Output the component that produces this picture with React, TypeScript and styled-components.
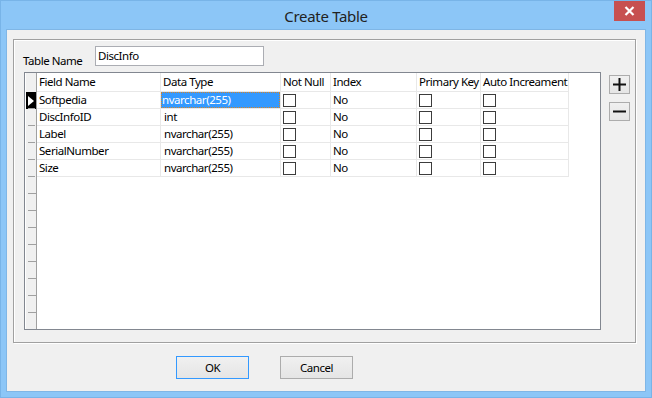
import React from "react";
import styled, { createGlobalStyle } from "styled-components";

const COLS = "12px 124px 120px 50px 86px 64px 88px";

const fields = [
  { name: "Softpedia", type: "nvarchar(255)", active: true },
  { name: "DiscInfoID", type: "int" },
  { name: "Label", type: "nvarchar(255)" },
  { name: "SerialNumber", type: "nvarchar(255)" },
  { name: "Size", type: "nvarchar(255)" },
];

function App() {
  return (
    <>
      <GlobalStyle />
      <Window>
        <TitleBar>
          <span />
          <Title>Create Table</Title>
          <CloseButton>
            <svg width="11" height="10" viewBox="0 0 11 10">
              <path d="M1.5 1 L9.5 9 M9.5 1 L1.5 9" stroke="#fff" strokeWidth="2.2" />
            </svg>
          </CloseButton>
        </TitleBar>

        <Client>
          <GroupBox>
            <NameRow>
              <Label>Table Name</Label>
              <TextBox>DiscInfo</TextBox>
            </NameRow>

            <GridRowArea>
              <Grid>
                <Row header>
                  <RowHead header />
                  <HeadCell>Field Name</HeadCell>
                  <HeadCell>Data Type</HeadCell>
                  <HeadCell>Not Null</HeadCell>
                  <HeadCell>Index</HeadCell>
                  <HeadCell>Primary Key</HeadCell>
                  <HeadCell>Auto Increament</HeadCell>
                </Row>

                {fields.map((f) => (
                  <Row key={f.name}>
                    <RowHead active={f.active}>
                      {f.active && (
                        <svg width="6" height="10" viewBox="0 0 6 10">
                          <path d="M0 0 L6 5 L0 10 Z" fill="#fff" />
                        </svg>
                      )}
                    </RowHead>
                    <Cell>{f.name}</Cell>
                    <Cell selected={f.active}>
                      <CellText selected={f.active}>{f.type}</CellText>
                    </Cell>
                    <Cell>
                      <CheckBox />
                    </Cell>
                    <Cell>No</Cell>
                    <Cell>
                      <CheckBox />
                    </Cell>
                    <Cell>
                      <CheckBox />
                    </Cell>
                  </Row>
                ))}

                <Filler>
                  <RowHeadStrip />
                </Filler>
              </Grid>

              <SideButtons>
                <SmallButton>
                  <svg width="13" height="13" viewBox="0 0 13 13">
                    <path d="M6.5 0 V13 M0 6.5 H13" stroke="#111" strokeWidth="2" />
                  </svg>
                </SmallButton>
                <SmallButton>
                  <svg width="13" height="13" viewBox="0 0 13 13">
                    <path d="M0 6.5 H13" stroke="#111" strokeWidth="2" />
                  </svg>
                </SmallButton>
              </SideButtons>
            </GridRowArea>
          </GroupBox>

          <ButtonBar>
            <DialogButton focused>OK</DialogButton>
            <DialogButton>Cancel</DialogButton>
          </ButtonBar>
        </Client>
      </Window>
    </>
  );
}

const GlobalStyle = createGlobalStyle`
  body {
    margin: 0;
    font-family: "Noto Sans", "Open Sans", sans-serif;
    font-size: 11.5px;
    letter-spacing: -0.45px;
    color: #000;
  }
`;

const Window = styled.div`
  width: 652px;
  height: 398px;
  box-sizing: border-box;
  background: #8cc6f7;
  border: 1px solid #78b4e8;
  padding: 0 5px 5px 5px;
  display: flex;
  flex-direction: column;
`;

const TitleBar = styled.div`
  height: 28px;
  display: grid;
  grid-template-columns: 1fr auto 1fr;
  align-items: start;
`;

const Title = styled.div`
  font-size: 15px;
  color: #222;
  line-height: 30px;
  letter-spacing: -0.3px;
`;

const CloseButton = styled.div`
  justify-self: end;
  width: 31px;
  height: 20px;
  margin-right: 1px;
  background: #c75050;
  display: flex;
  align-items: center;
  justify-content: center;
`;

const Client = styled.div`
  flex: 1;
  background: #f0f0f0;
  border: 1px solid #7fb6e6;
  display: flex;
  flex-direction: column;
`;

const GroupBox = styled.div`
  margin: 9px 9px 0 6px;
  height: 304px;
  box-sizing: border-box;
  border: 1px solid #a0a0a0;
  box-shadow: inset 1px 1px 0 #fff, 1px 1px 0 #fff;
  display: flex;
  flex-direction: column;
`;

const NameRow = styled.div`
  display: flex;
  align-items: flex-start;
  height: 20px;
  padding: 6px 0 0 9px;
`;

const Label = styled.div`
  width: 72px;
  margin-top: 7px;
  line-height: 16px;
`;

const TextBox = styled.div`
  width: 169px;
  height: 20px;
  box-sizing: border-box;
  background: #fff;
  border: 1px solid #abadb3;
  padding: 0 2px;
  line-height: 17px;
`;

const GridRowArea = styled.div`
  display: flex;
  align-items: flex-start;
  margin: 6px 0 0 10px;
  gap: 8px;
`;

const Grid = styled.div`
  width: 577px;
  height: 258px;
  box-sizing: border-box;
  border: 1px solid #828790;
  background: #fff;
  display: flex;
  flex-direction: column;
  overflow: hidden;
`;

const Row = styled.div<{ header?: boolean }>`
  display: grid;
  grid-template-columns: ${COLS};
  height: ${(p) => (p.header ? "19px" : "17px")};
  flex: none;
`;

const RowHead = styled.div<{ header?: boolean; active?: boolean }>`
  box-sizing: border-box;
  background: ${(p) => (p.active ? "#000" : "#f0f0f0")};
  border-right: 1px solid #a0a0a0;
  border-left: 1px solid #fff;
  display: flex;
  align-items: center;
  justify-content: center;
  position: relative;

  &::after {
    content: "";
    position: absolute;
    left: 2px;
    right: 1px;
    bottom: 0;
    height: 1px;
    background: ${(p) => (p.header ? "transparent" : "#a0a0a0")};
  }
`;

const HeadCell = styled.div`
  box-sizing: border-box;
  border-right: 1px solid #e8e8e8;
  border-bottom: 1px solid #e8e8e8;
  padding-left: 2px;
  line-height: 18px;
  white-space: nowrap;
  overflow: hidden;
`;

const Cell = styled.div<{ selected?: boolean }>`
  box-sizing: border-box;
  border-right: 1px solid #e8e8e8;
  border-bottom: 1px solid #e8e8e8;
  padding-left: ${(p) => (p.selected ? "0" : "2px")};
  line-height: 16px;
  white-space: nowrap;
  overflow: hidden;
  display: flex;
  align-items: center;
`;

const CellText = styled.span<{ selected?: boolean }>`
  flex: 1;
  align-self: stretch;
  padding-left: 1px;
  background: ${(p) => (p.selected ? "#3399ff" : "transparent")};
  color: ${(p) => (p.selected ? "#fff" : "#000")};
  outline: ${(p) => (p.selected ? "1px dotted #d2842c" : "none")};
  outline-offset: -1px;
`;

const CheckBox = styled.span`
  width: 13px;
  height: 13px;
  box-sizing: border-box;
  border: 1px solid #3c3c3c;
  background: #fff;
`;

const Filler = styled.div`
  flex: 1;
  display: flex;
`;

const RowHeadStrip = styled.div`
  width: 12px;
  box-sizing: border-box;
  border-left: 1px solid #fff;
  border-right: 1px solid #a0a0a0;
  background-color: #f0f0f0;
  background-image: repeating-linear-gradient(
    to bottom,
    transparent 0,
    transparent 16px,
    #a0a0a0 16px,
    #a0a0a0 17px
  );
  background-size: 8px 100%;
  background-position: 2px 0;
  background-repeat: no-repeat;
`;

const SideButtons = styled.div`
  display: flex;
  flex-direction: column;
  gap: 8px;
  margin-top: 3px;
`;

const SmallButton = styled.div`
  width: 21px;
  height: 19px;
  box-sizing: border-box;
  border: 1px solid #acacac;
  background: linear-gradient(#f0f0f0, #e5e5e5);
  display: flex;
  align-items: center;
  justify-content: center;
`;

const ButtonBar = styled.div`
  display: flex;
  gap: 31px;
  padding: 13px 0 0 169px;
`;

const DialogButton = styled.div<{ focused?: boolean }>`
  width: 73px;
  height: 23px;
  box-sizing: border-box;
  border: 1px solid ${(p) => (p.focused ? "#3399ff" : "#acacac")};
  background: linear-gradient(#f0f0f0, #e5e5e5);
  display: flex;
  align-items: center;
  justify-content: center;
  color: #000;
`;

export default App;
